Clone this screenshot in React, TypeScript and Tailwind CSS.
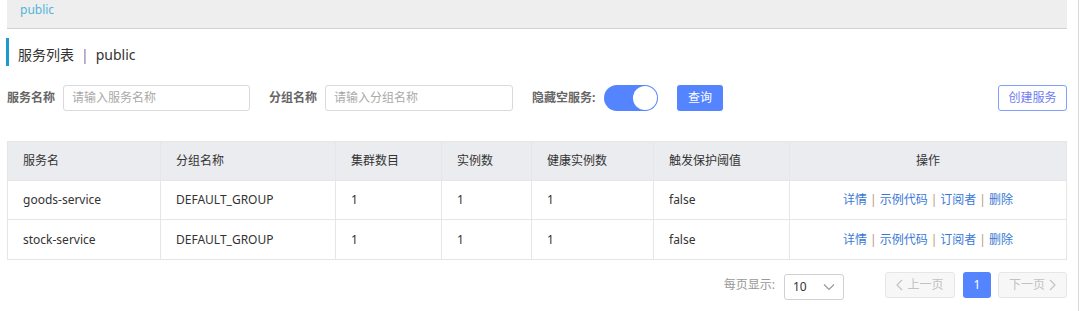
import React from "react";

const cols = [
  { label: "服务名", w: "w-[153px]" },
  { label: "分组名称", w: "w-[175px]" },
  { label: "集群数目", w: "w-[106px]" },
  { label: "实例数", w: "w-[90px]" },
  { label: "健康实例数", w: "w-[122px]" },
  { label: "触发保护阈值", w: "w-[136px]" },
];

const rows = [
  ["goods-service", "DEFAULT_GROUP", "1", "1", "1", "false"],
  ["stock-service", "DEFAULT_GROUP", "1", "1", "1", "false"],
];

function Ops() {
  return (
    <div className="flex items-center justify-center gap-[3px] text-[12px] text-[#3a78d6]">
      <span>详情</span>
      <span className="text-[#b39a7a]">|</span>
      <span>示例代码</span>
      <span className="text-[#b39a7a]">|</span>
      <span>订阅者</span>
      <span className="text-[#b39a7a]">|</span>
      <span>删除</span>
    </div>
  );
}

export default function App() {
  return (
    <div
      className="w-[1079px] h-[311px] border-r border-[#d9d9d9] bg-white text-[#333]"
      style={{ fontFamily: '"Noto Sans", "Noto Sans CJK SC", sans-serif' }}
    >
      <div className="pl-[7px] w-[1067px]">
        <div className="h-[29px] bg-[#eeeeee] border-b border-[#d2d2d2] pl-[13px] flex items-center">
          <span className="text-[12px] text-[#4fb6dc] -mt-[8px]">public</span>
        </div>

        <div className="mt-[9px] -ml-[1px] flex items-center h-[28px] border-l-[3px] border-[#1b9ad2] pl-[9px] pt-[4px]">
          <span className="text-[14px] text-[#333]">服务列表</span>
          <span className="text-[14px] text-[#8a6fa8] mx-[7px]">|</span>
          <span className="text-[14px] text-[#333]">public</span>
        </div>

        <div className="mt-[19px] flex items-center h-[26px]">
          <span className="text-[12px] font-bold text-[#666] w-[56px]">服务名称</span>
          <div className="w-[187px] h-[26px] border border-[#d9d9de] rounded-[3px] flex items-center pl-[8px] text-[12px] text-[#aaa]">
            请输入服务名称
          </div>
          <span className="text-[12px] font-bold text-[#666] ml-[19px] w-[56px]">分组名称</span>
          <div className="w-[188px] h-[26px] border border-[#d9d9de] rounded-[3px] flex items-center pl-[8px] text-[12px] text-[#aaa]">
            请输入分组名称
          </div>
          <span className="text-[12px] font-bold text-[#666] ml-[19px] w-[72px]">隐藏空服务:</span>
          <div className="w-[54px] h-[26px] rounded-full bg-[#5584ff] relative">
            <div className="absolute right-[1px] top-[1px] w-[24px] h-[24px] rounded-full bg-white" />
          </div>
          <div className="ml-[19px] w-[46px] h-[26px] rounded-[3px] bg-[#5584ff] text-white text-[12px] flex items-center justify-center">
            查询
          </div>
          <div className="ml-auto w-[69px] h-[26px] rounded-[3px] border border-[#7ea0ff] text-[#6f7cf0] text-[12px] flex items-center justify-center">
            创建服务
          </div>
        </div>

        <div className="mt-[30px] border border-[#e6e6e6]">
          <div className="flex h-[39px] bg-[#ebecf0] border-b border-[#e6e6e6] text-[12px] text-[#333]">
            {cols.map((c) => (
              <div key={c.label} className={`${c.w} border-r border-[#e6e6e6] flex items-center pl-[15px]`}>
                {c.label}
              </div>
            ))}
            <div className="flex-1 flex items-center justify-center">操作</div>
          </div>
          {rows.map((r, i) => (
            <div key={i} className={`flex h-[39px] text-[12px] text-[#333] ${i === 0 ? "border-b border-[#e6e6e6]" : ""}`}>
              {r.map((v, j) => (
                <div key={j} className={`${cols[j].w} border-r border-[#e6e6e6] flex items-center pl-[15px]`}>
                  {v}
                </div>
              ))}
              <div className="flex-1 flex items-center justify-center">
                <Ops />
              </div>
            </div>
          ))}
        </div>

        <div className="mt-[10px] flex items-center justify-end">
          <span className="text-[12px] text-[#999] mr-[9px]">每页显示:</span>
          <div className="w-[60px] h-[26px] border border-[#d0d0d5] rounded-[3px] flex items-center justify-between pl-[8px] pr-[8px] text-[12px] text-[#333] mt-[4px]">
            <span>10</span>
            <svg width="12" height="8" viewBox="0 0 12 8" fill="none">
              <path d="M1 1.5 L6 6.5 L11 1.5" stroke="#999" strokeWidth="1.2" />
            </svg>
          </div>
          <div className="ml-[41px] w-[70px] h-[26px] border border-[#e6e6e6] bg-[#f7f7f7] rounded-[3px] flex items-center justify-center gap-[4px] text-[12px] text-[#c2c2c2]">
            <svg width="7" height="12" viewBox="0 0 7 12" fill="none">
              <path d="M6 1 L1 6 L6 11" stroke="#c2c2c2" strokeWidth="1.2" />
            </svg>
            <span>上一页</span>
          </div>
          <div className="ml-[8px] w-[28px] h-[26px] rounded-[3px] bg-[#5584ff] text-white text-[12px] flex items-center justify-center">
            1
          </div>
          <div className="ml-[7px] w-[69px] h-[26px] border border-[#e6e6e6] bg-[#f7f7f7] rounded-[3px] flex items-center justify-center gap-[4px] text-[12px] text-[#c2c2c2]">
            <span>下一页</span>
            <svg width="7" height="12" viewBox="0 0 7 12" fill="none">
              <path d="M1 1 L6 6 L1 11" stroke="#c2c2c2" strokeWidth="1.2" />
            </svg>
          </div>
        </div>
      </div>
    </div>
  );
}
